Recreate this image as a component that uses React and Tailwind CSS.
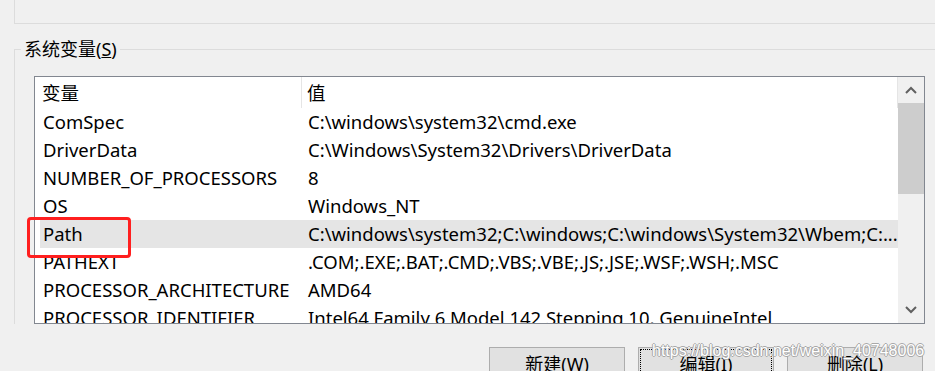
import React from "react";

const rows = [
  ["ComSpec", "C:\\windows\\system32\\cmd.exe"],
  ["DriverData", "C:\\Windows\\System32\\Drivers\\DriverData"],
  ["NUMBER_OF_PROCESSORS", "8"],
  ["OS", "Windows_NT"],
  ["Path", "C:\\windows\\system32;C:\\windows;C:\\windows\\System32\\Wbem;C:..."],
  ["PATHEXT", ".COM;.EXE;.BAT;.CMD;.VBS;.VBE;.JS;.JSE;.WSF;.WSH;.MSC"],
  ["PROCESSOR_ARCHITECTURE", "AMD64"],
  ["PROCESSOR_IDENTIFIER", "Intel64 Family 6 Model 142 Stepping 10, GenuineIntel"],
];

const font = {
  fontFamily: '"Noto Sans", "Noto Sans CJK SC", sans-serif',
};

const Chevron = ({ up }) => (
  <svg width="12" height="8" viewBox="0 0 12 8">
    <path
      d={up ? "M1 7 L6 2 L11 7" : "M1 1 L6 6 L11 1"}
      fill="none"
      stroke="#606060"
      strokeWidth="2"
    />
  </svg>
);

const Button = ({ label, hotkey, focused }) => (
  <button className="w-[136px] h-[34px] bg-[#e1e1e1] border border-[#adadad] p-[2px] text-[18px] text-black">
    <span
      className={`flex items-center justify-center w-full h-full ${
        focused ? "outline outline-1 outline-dotted outline-black" : ""
      }`}
    >
      {label}(<span className="underline">{hotkey}</span>)
    </span>
  </button>
);

export default function App() {
  return (
    <div
      className="relative w-[935px] h-[371px] overflow-hidden bg-[#f0f0f0] text-black"
      style={font}
    >
      {/* previous group box */}
      <div className="ml-[14px] h-[24px] border-l border-b border-[#dcdcdc]" />

      {/* 系统变量 group */}
      <fieldset className="ml-[14px] mt-[13px] border-t border-l border-[#dcdcdc] pr-[11px]">
        <legend className="ml-[6px] px-[3px] text-[18px] leading-[24px]">
          系统变量(<span className="underline">S</span>)
        </legend>

        <div className="relative ml-[19px] mt-[15px] h-[248px] bg-white border border-[#828790] flex">
          <div className="flex-1 min-w-0 overflow-hidden text-[18.5px]">
            {/* header */}
            <div className="flex h-[31px] items-center">
              <div className="w-[267px] pl-[7px] h-full flex items-center border-r border-[#e5e5e5]">
                变量
              </div>
              <div className="flex-1 pl-[5px] h-full flex items-center border-r border-[#e5e5e5]">
                值
              </div>
            </div>
            {rows.map(([name, value]) => (
              <div
                key={name}
                className={`ml-[5px] flex h-[28px] items-center whitespace-nowrap ${
                  name === "Path" ? "bg-[#e5e5e5]" : ""
                }`}
              >
                <div className="w-[262px] pl-[3px]">{name}</div>
                <div className="flex-1 min-w-0 pl-[6px] overflow-hidden">{value}</div>
              </div>
            ))}
          </div>

          {/* scrollbar */}
          <div className="w-[26px] bg-[#f0f0f0] flex flex-col">
            <div className="h-[26px] flex items-center justify-center">
              <Chevron up />
            </div>
            <div className="h-[91px] bg-[#cdcdcd]" />
            <div className="flex-1" />
            <div className="h-[26px] flex items-center justify-center">
              <Chevron />
            </div>
          </div>

          {/* red annotation box */}
          <div className="absolute left-[-8px] top-[140px] w-[104px] h-[41px] border-[3px] border-[#ff1f1f] rounded-[4px]" />
        </div>
      </fieldset>

      {/* buttons */}
      <div className="flex justify-end gap-[13px] pr-[12px] mt-[23px]">
        <Button label="新建" hotkey="W" />
        <Button label="编辑" hotkey="I" focused />
        <Button label="删除" hotkey="L" />
      </div>

      {/* watermark */}
      <div
        className="absolute left-[652px] top-[343px] text-[16px] leading-[16px] text-white whitespace-nowrap pointer-events-none"
        style={{
          fontFamily: '"Liberation Sans", Arial, sans-serif',
          textShadow:
            "1px 0 0 #a8a8a8, -1px 0 0 #a8a8a8, 0 1px 0 #a8a8a8, 0 -1px 0 #a8a8a8",
        }}
      >
        https://blog.csdn.net/weixin_40748006
      </div>
    </div>
  );
}
